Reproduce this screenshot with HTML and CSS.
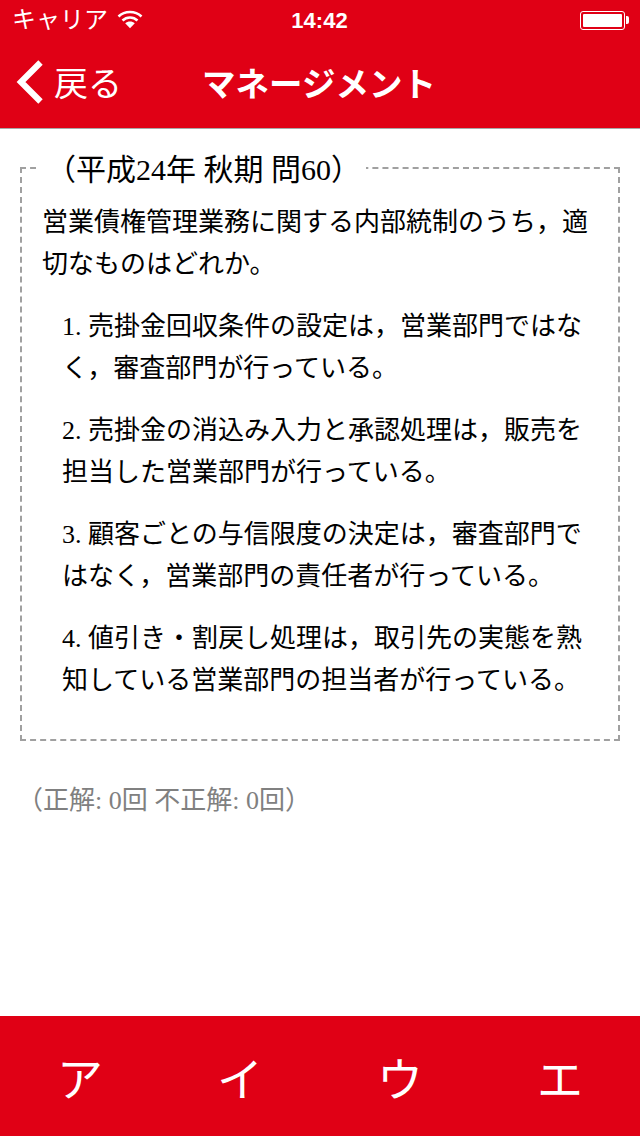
FILE: index.html
```html
<!DOCTYPE html>
<html lang="ja">
<head>
<meta charset="utf-8">
<title>マネージメント</title>
<link rel="stylesheet" href="styles.css">
</head>
<body>
<div class="app">
  <header class="header">
    <div class="status">
      <div class="status-left">
        <span class="carrier">キャリア</span>
        <svg class="wifi" width="26" height="20" viewBox="0 0 26 20"><path d="M1.5 7.5C7.8 1.5 18.2 1.5 24.5 7.5" fill="none" stroke="#fff" stroke-width="2.6"/><path d="M5.5 11.5C9.8 7.5 16.2 7.5 20.5 11.5" fill="none" stroke="#fff" stroke-width="2.6"/><path d="M8.2 14.3C10.8 11.9 15.2 11.9 17.8 14.3L13 19.2Z" fill="#fff"/></svg>
      </div>
      <span class="time">14:42</span>
      <div class="status-right">
        <span class="battery"><span class="battery-fill"></span></span>
        <span class="battery-tip"></span>
      </div>
    </div>
    <nav class="nav">
      <a class="back">
        <svg class="chevron" width="28" height="44" viewBox="0 0 28 44"><path d="M24.5 2.5L5 22L24.5 41.5" fill="none" stroke="#fff" stroke-width="6.2"/></svg>
        <span>戻る</span>
      </a>
      <h1 class="title">マネージメント</h1>
    </nav>
  </header>
  <main class="main">
    <fieldset class="question">
      <legend class="legend">（平成24年 秋期 問60）</legend>
      <p class="prompt">営業債権管理業務に関する内部統制のうち，適切なものはどれか。</p>
      <ol class="choices">
        <li>1. 売掛金回収条件の設定は，営業部門ではなく，審査部門が行っている。</li>
        <li>2. 売掛金の消込み入力と承認処理は，販売を担当した営業部門が行っている。</li>
        <li>3. 顧客ごとの与信限度の決定は，審査部門ではなく，営業部門の責任者が行っている。</li>
        <li>4. 値引き・割戻し処理は，取引先の実態を熟知している営業部門の担当者が行っている。</li>
      </ol>
    </fieldset>
    <p class="score">（正解: 0回 不正解: 0回）</p>
  </main>
  <footer class="answers">
    <span>ア</span><span>イ</span><span>ウ</span><span>エ</span>
  </footer>
</div>
</body>
</html>
```
FILE: styles.css
```css
* { box-sizing: border-box; }
html, body { margin: 0; padding: 0; background: #fff; }
.app {
  width: 640px;
  height: 1136px;
  display: flex;
  flex-direction: column;
  font-family: "Liberation Serif", "Noto Sans CJK JP", serif;
  color: #000;
  overflow: hidden;
}
.header {
  height: 129px;
  background: #e00015;
  border-bottom: 1px solid #a8a8a8;
  color: #fff;
  font-family: "Liberation Sans", "Noto Sans CJK JP", sans-serif;
}
.status {
  height: 40px;
  display: grid;
  grid-template-columns: 1fr auto 1fr;
  align-items: center;
  padding: 0 11px 0 12px;
}
.status-left { display: flex; align-items: center; gap: 12px; }
.carrier { font-size: 24px; line-height: 40px; margin-top: -1px; }
.wifi { margin-top: -3px; margin-left: -3px; }
.time { font-size: 22px; font-weight: 700; margin: 1px 0 0 -2px; }
.status-right { display: flex; justify-content: flex-end; align-items: center; }
.battery {
  width: 45px;
  height: 19px;
  border: 1px solid #fff;
  border-radius: 3px;
  padding: 2px;
  display: block;
}
.battery-fill { display: block; height: 100%; background: #fff; border-radius: 1px; }
.battery-tip { width: 3px; height: 8px; background: #fff; border-radius: 0 2px 2px 0; margin-left: 1px; }
.nav {
  position: relative;
  height: 88px;
  display: flex;
  align-items: center;
  justify-content: center;
  padding-bottom: 5px;
}
.back {
  position: absolute;
  left: 16px;
  top: 0;
  height: 83px;
  display: flex;
  align-items: center;
  gap: 10px;
  font-size: 34px;
}
.title { margin: 0 0 0 -2px; font-size: 33.5px; font-weight: 700; letter-spacing: 0; }
.main { flex: 1; padding: 18px 20px 0; }
.question {
  margin: 0;
  height: 594px;
  border: 2px dashed #a0a0a0;
  padding: 0 20px;
  min-width: 0;
  font-size: 26px;
  line-height: 42px;
}
.legend {
  margin-left: -6px;
  padding: 4px 5px 0 10px;
  font-size: 30px;
  line-height: 38px;
}
.prompt { margin: 13px 0 0; width: 546px; }
.choices { list-style: none; margin: 20px 0 0; padding: 0 0 0 20px; }
.choices li { width: 522px; margin-bottom: 20px; }
.score { margin: 39px 0 0 -3px; color: #808080; font-size: 26px; line-height: 42px; }
.answers {
  height: 120px;
  background: #e00015;
  display: grid;
  grid-template-columns: repeat(4, 1fr);
  align-items: center;
  text-align: center;
  color: #fff;
  font-family: "Noto Sans CJK JP", sans-serif;
  font-size: 46px;
}
```
